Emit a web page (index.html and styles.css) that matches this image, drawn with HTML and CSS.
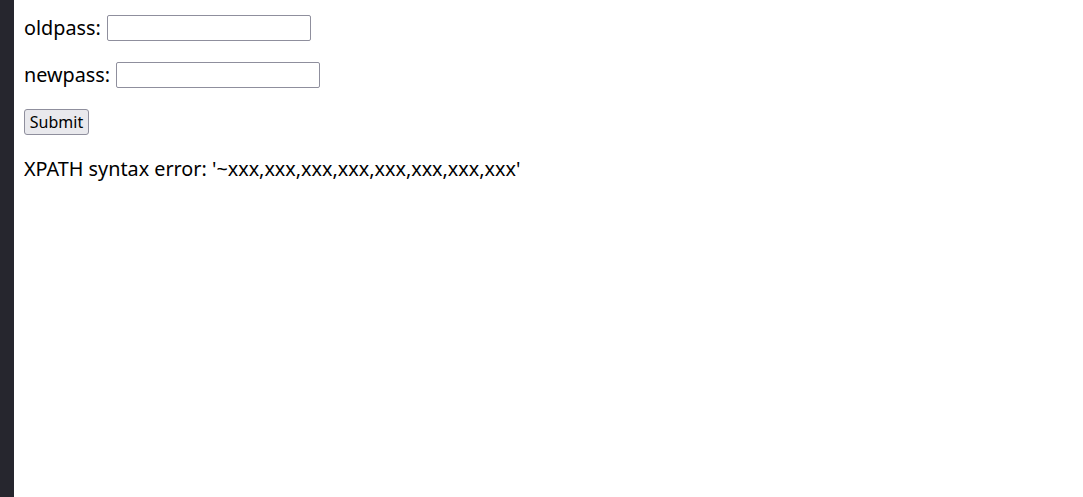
FILE: index.html
```html
<!DOCTYPE html>
<html>
<head>
<meta charset="utf-8">
<link rel="stylesheet" href="styles.css">
</head>
<body>
<div class="page">
  <div class="strip"></div>
  <div class="content">
    <form class="form">
      <div class="row">oldpass: <input class="field field-old" type="text"></div>
      <div class="row">newpass: <input class="field field-new" type="text"></div>
      <div class="row"><button class="btn" type="button">Submit</button></div>
    </form>
    <div class="row msg">XPATH syntax error: '~xxx,xxx,xxx,xxx,xxx,xxx,xxx,xxx'</div>
  </div>
</div>
</body>
</html>
```
FILE: styles.css
```css
html, body {
  margin: 0;
  padding: 0;
  height: 100%;
  background: #ffffff;
}
.page {
  display: flex;
  height: 497px;
}
.strip {
  width: 14px;
  flex: none;
  background: #26262e;
}
.content {
  flex: 1;
  padding: 13px 0 0 10px;
  display: flex;
  flex-direction: column;
  gap: 18px;
  font-family: "Noto Sans", "Open Sans", sans-serif;
  font-size: 19.8px;
  color: #000;
}
.form {
  display: flex;
  flex-direction: column;
  gap: 18px;
  margin: 0;
}
.row {
  height: 29px;
  display: flex;
  align-items: center;
  white-space: pre;
}
.field {
  box-sizing: border-box;
  width: 204px;
  height: 26px;
  border: 1px solid #8f8f9d;
  border-radius: 2px;
  margin: 0 0 0 1px;
  padding: 1px 2px;
  background: #fff;
  font-size: 13px;
}
.btn {
  box-sizing: border-box;
  height: 26px;
  width: 65px;
  padding: 0;
  border: 1px solid #8f8f9d;
  border-radius: 3px;
  background: #e9e9ed;
  font-family: "Noto Sans", sans-serif;
  font-size: 16px;
  color: #000;
}
```
